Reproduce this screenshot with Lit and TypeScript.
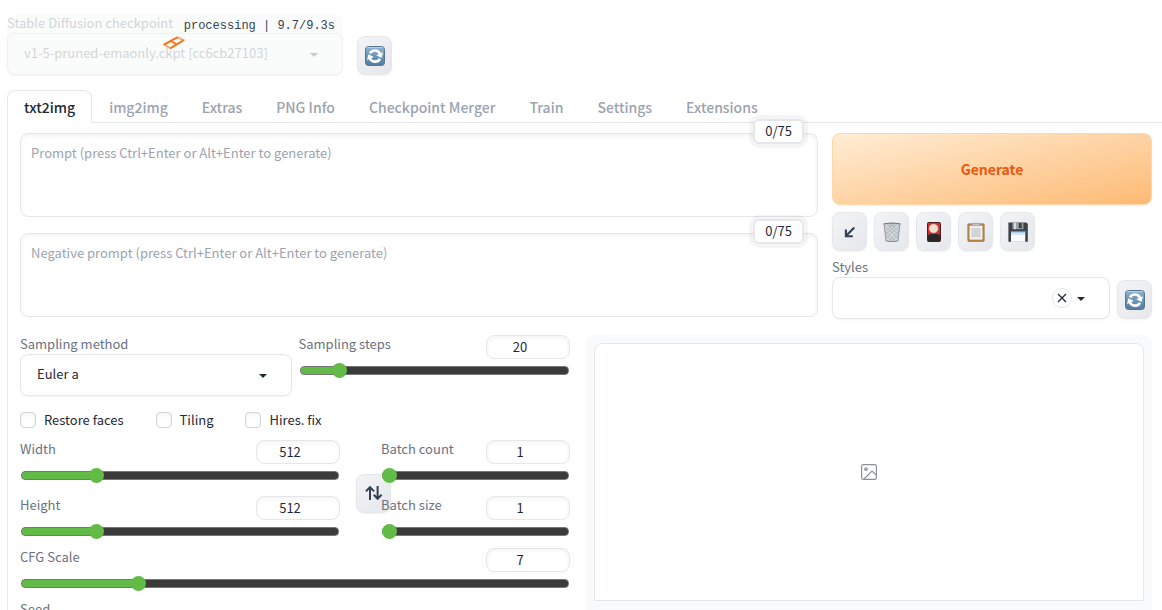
import { LitElement, html, css, svg, nothing } from "lit";
import { customElement, property, state } from "lit/decorators.js";

const reset = css`
  *,
  *::before,
  *::after {
    box-sizing: border-box;
  }
  button,
  input,
  select,
  textarea {
    margin: 0;
    font: inherit;
    color: inherit;
  }
  svg {
    display: block;
  }
`;

const glyphs: Record<string, unknown> = {
  refresh: svg`
    <defs>
      <linearGradient id="tile" x1="0" y1="0" x2="0" y2="1">
        <stop offset="0" stop-color="#8fb4cf" />
        <stop offset="0.45" stop-color="#6f98b8" />
        <stop offset="1" stop-color="#557c9e" />
      </linearGradient>
    </defs>
    <rect x="0.5" y="0.5" width="19" height="19" rx="3" fill="url(#tile)" stroke="#567690" />
    <path d="M2 1.6H18" stroke="#bcd5e6" />
    <path d="M5 7.4C7 3.6 13 3.4 15.2 8" fill="none" stroke="#fff" stroke-width="2.6" />
    <path d="M11.2 9.2L18 6.2L16.6 12Z" fill="#fff" />
    <path d="M15 12.8C13 16.6 7 16.8 4.8 12.2" fill="none" stroke="#fff" stroke-width="2.6" />
    <path d="M8.8 11L2 14L3.4 8.2Z" fill="#fff" />`,
  arrow: svg`
    <path d="M14.3 5.4L6.4 13.6M5.9 7.4V14.2H12.8" fill="none" stroke="#334155" stroke-width="2.1" />`,
  trash: svg`
    <path d="M1.4 2.4H18.6L16.3 19.2Q10 20.6 3.7 19.2Z" fill="#d3d8dc" />
    <path d="M3 4L15.6 16M7 4L16.4 12.6M11 4L17 9.4M3.4 9L12 18M3.8 13L9 18.4M17 4L4.4 16M13 4L3.7 12.6M9 4L3.2 9.4M16.6 9L8 18M16.2 13L11 18.4" stroke="#a4acb3" stroke-width="0.7" fill="none" />
    <path d="M2.2 3L4 18.6M17.8 3L16 18.6" stroke="#8b949c" stroke-width="0.9" />
    <ellipse cx="10" cy="2" rx="9.2" ry="1.5" fill="#75808a" />
    <ellipse cx="10" cy="2.5" rx="7.8" ry="0.8" fill="#c2c8cd" />
    <path d="M3.8 18.2Q10 19.6 16.2 18.2V19.2Q10 20.6 3.8 19.2Z" fill="#6b86a0" />`,
  card: svg`
    <rect x="3.5" y="0.5" width="13" height="19" rx="1" fill="#d02a2e" stroke="#4a1e20" />
    <path d="M4 13Q10 10.6 16 13V19H4Z" fill="#2b2628" />
    <circle cx="9.6" cy="6.5" r="4.5" fill="#e9e0d0" stroke="#c8a493" stroke-width="0.6" />`,
  clipboard: svg`
    <rect x="1.8" y="1.8" width="16.4" height="17.6" rx="0.8" fill="#b98747" stroke="#94672f" stroke-width="0.6" />
    <rect x="3.6" y="3.6" width="12.8" height="14" fill="#f4f4f4" />
    <rect x="5.2" y="6" width="9.6" height="9.4" fill="#d3d4d6" />
    <path d="M5.6 3.8V2.4L8.2 1.6Q10 -0.8 11.8 1.6L14.4 2.4V3.8Z" fill="#bfc3c7" stroke="#8e9498" stroke-width="0.5" />`,
  floppy: svg`
    <path d="M0.4 0.6H18.4L19.8 2V19.8H0.4Z" fill="#3e4146" />
    <rect x="4.4" y="0.6" width="11" height="6.6" fill="#9da2a7" />
    <rect x="6" y="0.6" width="2" height="6.6" fill="#d9dcdf" />
    <rect x="10.8" y="1" width="3" height="5.2" fill="#3e4146" />
    <rect x="3" y="9" width="14.2" height="10.8" fill="#fafcff" />
    <path d="M3 9H17.2V10.6H3Z" fill="#4b98dc" />
    <path d="M3 10.6H17.2V13H3Z" fill="#d3e6f7" />`,
  swap: svg`
    <path d="M6 17V4.6M1.9 8.4L6 4.2L10.1 8.4M13.6 3V15.4M9.8 11.8L13.6 15.8L17.6 11.8" fill="none" stroke="#334155" stroke-width="2" />`,
  image: svg`
    <rect x="2.6" y="2.6" width="14.8" height="14.8" rx="1.6" fill="none" stroke="#8b919b" stroke-width="1.2" />
    <circle cx="7" cy="7.2" r="1.5" fill="#b3b8c0" stroke="#8b919b" stroke-width="0.9" />
    <path d="M5 17L13 9L17.4 13.2" fill="none" stroke="#8b919b" stroke-width="1.2" />`,
};

@customElement("ui-glyph")
class UiGlyph extends LitElement {
  @property() name = "";
  static styles = [
    reset,
    css`
      :host {
        display: block;
        width: 20px;
        height: 20px;
      }
    `,
  ];
  render() {
    return html`<svg viewBox="0 0 20 20" width="20" height="20" aria-hidden="true">${glyphs[this.name]}</svg>`;
  }
}

@customElement("tool-button")
class ToolButton extends LitElement {
  @property() icon = "";
  @property() label = "";
  static styles = [
    reset,
    css`
      :host {
        display: block;
        flex: none;
      }
      .tool {
        display: grid;
        place-items: center;
        width: 35px;
        height: 39px;
        padding: 0;
        border: 1px solid #e5e7eb;
        border-radius: 8px;
        background: linear-gradient(135deg, #f3f4f6, #e5e7eb);
        box-shadow: 0 1px 2px rgba(0, 0, 0, 0.05);
        cursor: pointer;
      }
    `,
  ];
  render() {
    return html`<button class="tool" type="button" aria-label=${this.label}>
      <ui-glyph name=${this.icon}></ui-glyph>
    </button>`;
  }
}

@customElement("drop-down")
class DropDown extends LitElement {
  @property() label = "";
  @property({ attribute: false }) options: string[] = [];
  @property({ type: Boolean }) clearable = false;
  @property({ type: Boolean, reflect: true }) pending = false;
  static styles = [
    reset,
    css`
      :host {
        display: block;
        min-width: 0;
      }
      .label {
        display: block;
        line-height: 18px;
        margin-bottom: 1px;
        color: #6b7280;
      }
      .box {
        display: grid;
        grid-template-columns: 1fr auto;
        align-items: center;
      }
      .select {
        grid-area: 1 / 1 / 2 / 3;
        width: 100%;
        height: 42px;
        padding: 0 44px 3px 16px;
        border: 1px solid #e5e7eb;
        border-radius: 8px;
        background: #fff;
        box-shadow: 0 1px 2px rgba(0, 0, 0, 0.05);
        appearance: none;
        color: #1f2937;
      }
      .marks {
        grid-area: 1 / 2;
        display: flex;
        align-items: center;
        gap: 3px;
        padding-right: 23px;
        color: #1f2937;
        pointer-events: none;
      }
      .clear {
        display: grid;
        place-items: center;
        width: 20px;
        height: 20px;
        padding: 0;
        border: 1px solid #e5e7eb;
        border-radius: 50%;
        background: #fff;
        pointer-events: auto;
      }
      :host([pending]) .label,
      :host([pending]) .select {
        color: #d2d5d8;
      }
      :host([pending]) .select {
        background: #fafcfb;
        border-color: #f0f2f2;
      }
      :host([pending]) .marks {
        color: #c6c9cc;
      }
    `,
  ];
  render() {
    return html`
      <label class="label" for="field">${this.label}</label>
      <div class="box">
        <select class="select" id="field">
          ${this.options.map((o) => html`<option>${o}</option>`)}
        </select>
        <span class="marks">
          ${this.clearable
            ? html`<button class="clear" type="button" aria-label="Clear">
                <svg width="10" height="10" viewBox="0 0 10 10">
                  <path d="M1 1L9 9M9 1L1 9" stroke="currentColor" stroke-width="1.3" />
                </svg>
              </button>`
            : nothing}
          <svg width="12" height="12" viewBox="0 0 12 12"><path d="M2 5H10L6 9Z" fill="currentColor" /></svg>
        </span>
      </div>
    `;
  }
}

@customElement("value-slider")
class ValueSlider extends LitElement {
  @property() label = "";
  @property({ type: Number }) min = 1;
  @property({ type: Number }) max = 100;
  @property({ type: Number }) value = 1;
  static styles = [
    reset,
    css`
      :host {
        display: block;
        min-width: 0;
      }
      .head {
        display: flex;
        justify-content: space-between;
        align-items: flex-start;
      }
      .label {
        line-height: 18px;
        color: #6b7280;
      }
      .number {
        width: 84px;
        height: 24px;
        padding: 0 16px 1px 0;
        border: 1px solid #e5e7eb;
        border-radius: 8px;
        background: #fff;
        box-shadow: inset 0 2px 4px rgba(0, 0, 0, 0.05);
        text-align: center;
        color: #1f2937;
        appearance: textfield;
      }
      .number::-webkit-inner-spin-button {
        display: none;
      }
      .foot {
        display: flex;
        padding: 3px 1px 0;
      }
      .range {
        width: 100%;
        height: 17px;
        background: none;
        appearance: none;
      }
      .range::-webkit-slider-runnable-track {
        height: 9px;
        border: 1px solid #777;
        border-radius: 4px;
        background: linear-gradient(to right, #62bb46 var(--fill), #3b3b3b var(--fill));
      }
      .range::-webkit-slider-thumb {
        width: 15px;
        height: 15px;
        margin: -4px 0 0 -1px;
        border-radius: 50%;
        background: #62bb46;
        appearance: none;
      }
    `,
  ];
  private update_(e: Event) {
    this.value = Number((e.target as HTMLInputElement).value);
  }
  render() {
    const fill = ((this.value - this.min) / (this.max - this.min)) * 100;
    return html`
      <div class="head">
        <label class="label" for="number">${this.label}</label>
        <input class="number" id="number" type="number" min=${this.min} max=${this.max} .value=${String(this.value)} @change=${this.update_} />
      </div>
      <div class="foot">
        <input class="range" type="range" aria-label=${this.label} min=${this.min} max=${this.max} .value=${String(this.value)} style="--fill:${fill}%" @input=${this.update_} />
      </div>
    `;
  }
}

@customElement("prompt-box")
class PromptBox extends LitElement {
  @property() hint = "";
  static styles = [
    reset,
    css`
      :host {
        display: block;
        position: relative;
      }
      .text {
        display: block;
        width: 100%;
        height: 84px;
        padding: 9px 10px;
        border: 1px solid #e5e7eb;
        border-radius: 8px;
        background: #fff;
        box-shadow: inset 0 2px 4px rgba(0, 0, 0, 0.05);
        line-height: 20px;
        resize: none;
      }
      .text::placeholder {
        color: #9ca3af;
      }
      .count {
        position: absolute;
        top: -14px;
        right: 14px;
        padding: 0 10px 1px;
        border: 2px solid #e5e7eb;
        border-radius: 6px;
        background: #fff;
        box-shadow: 0 0 0 4px rgba(0, 0, 0, 0.04);
        line-height: 20px;
        color: #1f2937;
      }
    `,
  ];
  render() {
    return html`
      <textarea class="text" placeholder=${this.hint} aria-label=${this.hint}></textarea>
      <span class="count">0/75</span>
    `;
  }
}

@customElement("app-root")
class AppRoot extends LitElement {
  @state() private tab = "txt2img";
  private tabs = ["txt2img", "img2img", "Extras", "PNG Info", "Checkpoint Merger", "Train", "Settings", "Extensions"];
  private tools = [
    ["arrow", "Read generation parameters"],
    ["trash", "Clear prompt"],
    ["card", "Extra networks"],
    ["clipboard", "Apply styles"],
    ["floppy", "Save style"],
  ];
  static styles = [
    reset,
    css`
      :host {
        display: flex;
        flex-direction: column;
        height: 100vh;
        overflow: hidden;
        padding: 14px 0 0 7px;
        background: #fff;
        font-family: "Noto Sans CJK SC", "Noto Sans", sans-serif;
        font-size: 13px;
        color: #1f2937;
      }
      .top {
        display: flex;
        align-items: flex-end;
        gap: 14px;
      }
      .checkpoint {
        position: relative;
        width: 336px;
        border-radius: 8px;
        background: #fafcfb;
      }
      .status {
        position: absolute;
        top: 4px;
        right: 8px;
        font-family: "Liberation Mono", monospace;
        font-size: 12px;
        line-height: 16px;
        color: #374151;
      }
      .loader {
        position: absolute;
        top: 21px;
        left: 155px;
      }
      .tabs {
        display: flex;
        flex: none;
        margin-top: 15px;
        border-bottom: 1px solid #e5e7eb;
      }
      .tab {
        height: 33px;
        margin-bottom: -1px;
        padding: 0 16px;
        border: 1px solid transparent;
        border-bottom: 0;
        border-radius: 8px 8px 0 0;
        background: none;
        font-size: 14px;
        font-weight: 500;
        color: #9ca3af;
      }
      .tab.on {
        border-color: #e5e7eb;
        background: #fff;
        color: #1f2937;
      }
      .panel {
        flex: 1 0 auto;
        padding: 10px 10px 0 12px;
        border-left: 1px solid #e5e7eb;
      }
      .upper {
        display: grid;
        grid-template-columns: 1fr 320px;
        gap: 14px;
      }
      .prompts {
        display: grid;
        align-content: start;
        gap: 16px;
      }
      .generate {
        display: block;
        width: 100%;
        height: 72px;
        border: 1px solid #fed7aa;
        border-radius: 8px;
        background: linear-gradient(to bottom right, #ffedd5, #fdba74);
        box-shadow: 0 1px 2px rgba(0, 0, 0, 0.05);
        font-size: 14px;
        font-weight: 700;
        color: #ea580c;
      }
      .tools {
        display: flex;
        gap: 7px;
        margin: 7px 0;
      }
      .styles {
        display: flex;
        align-items: flex-end;
        gap: 7px;
      }
      .grow {
        flex: 1;
      }
      .lower {
        display: grid;
        grid-template-columns: 1fr 1fr;
        margin-top: 16px;
      }
      .settings {
        min-width: 0;
        padding-right: 16px;
      }
      .sampling {
        display: grid;
        grid-template-columns: 1fr 1fr;
        gap: 7px;
      }
      .checks {
        display: flex;
        gap: 32px;
        margin: 16px 0 12px;
      }
      .check {
        display: flex;
        gap: 8px;
        line-height: 16px;
      }
      .tick {
        width: 16px;
        height: 16px;
        border: 1px solid #d1d5db;
        border-radius: 4px;
        background: #fff;
        box-shadow: inset 0 2px 4px rgba(0, 0, 0, 0.05);
        appearance: none;
      }
      .tick:checked {
        background: #62bb46;
      }
      .sizes {
        display: flex;
        align-items: center;
        margin-bottom: 8px;
      }
      .pair {
        display: grid;
        gap: 12px;
        flex: 1;
      }
      .batch {
        position: relative;
        flex: 0 0 189px;
      }
      .swap {
        margin: 6px -10px 0 16px;
      }
      .seed {
        display: block;
        margin-top: 8px;
        line-height: 18px;
        color: #6b7280;
      }
      .results {
        align-self: start;
        height: 290px;
        padding: 8px;
        border-radius: 8px;
        background: #f9fafb;
      }
      .gallery {
        display: grid;
        place-items: center;
        height: 258px;
        border: 1px solid #e5e7eb;
        border-radius: 8px 8px 0 0;
        background: #fff;
      }
    `,
  ];
  render() {
    return html`
      <header class="top">
        <div class="checkpoint">
          <drop-down pending label="Stable Diffusion checkpoint" .options=${["v1-5-pruned-emaonly.ckpt [cc6cb27103]"]}></drop-down>
          <span class="status">processing | 9.7/9.3s</span>
          <svg class="loader" width="24" height="16" viewBox="0 0 24 16" fill="none" stroke-width="1.8">
            <path d="M2 9.6L15.6 2.2L21.6 5.2L8.4 13.2Z" stroke="#fba56b" />
            <path d="M2 9.6L15.6 2.2M8.4 13.2L21.6 5.2M9.2 6.2L14.6 9.2" stroke="#f97316" />
          </svg>
        </div>
        <tool-button icon="refresh" label="Refresh checkpoints"></tool-button>
      </header>
      <nav class="tabs" role="tablist">
        ${this.tabs.map(
          (t) => html`<button class="tab ${t === this.tab ? "on" : ""}" type="button" role="tab" aria-selected=${t === this.tab} @click=${() => (this.tab = t)}>${t}</button>`,
        )}
      </nav>
      <main class="panel">
        <section class="upper">
          <div class="prompts">
            <prompt-box hint="Prompt (press Ctrl+Enter or Alt+Enter to generate)"></prompt-box>
            <prompt-box hint="Negative prompt (press Ctrl+Enter or Alt+Enter to generate)"></prompt-box>
          </div>
          <div>
            <button class="generate" type="button">Generate</button>
            <div class="tools">
              ${this.tools.map(([icon, label]) => html`<tool-button icon=${icon} label=${label}></tool-button>`)}
            </div>
            <div class="styles">
              <drop-down class="grow" clearable label="Styles" .options=${[""]}></drop-down>
              <tool-button icon="refresh" label="Refresh styles"></tool-button>
            </div>
          </div>
        </section>
        <section class="lower">
          <div class="settings">
            <div class="sampling">
              <drop-down label="Sampling method" .options=${["Euler a"]}></drop-down>
              <value-slider label="Sampling steps" min="1" max="150" value="20"></value-slider>
            </div>
            <div class="checks">
              ${["Restore faces", "Tiling", "Hires. fix"].map(
                (c) => html`<label class="check"><input class="tick" type="checkbox" />${c}</label>`,
              )}
            </div>
            <div class="sizes">
              <div class="pair">
                <value-slider label="Width" min="64" max="2048" value="512"></value-slider>
                <value-slider label="Height" min="64" max="2048" value="512"></value-slider>
              </div>
              <tool-button class="swap" icon="swap" label="Switch width and height"></tool-button>
              <div class="pair batch">
                <value-slider label="Batch count" min="1" max="100" value="1"></value-slider>
                <value-slider label="Batch size" min="1" max="8" value="1"></value-slider>
              </div>
            </div>
            <value-slider label="CFG Scale" min="1" max="30" value="7"></value-slider>
            <span class="seed">Seed</span>
          </div>
          <div class="results">
            <div class="gallery"><ui-glyph name="image"></ui-glyph></div>
          </div>
        </section>
      </main>
    `;
  }
}
